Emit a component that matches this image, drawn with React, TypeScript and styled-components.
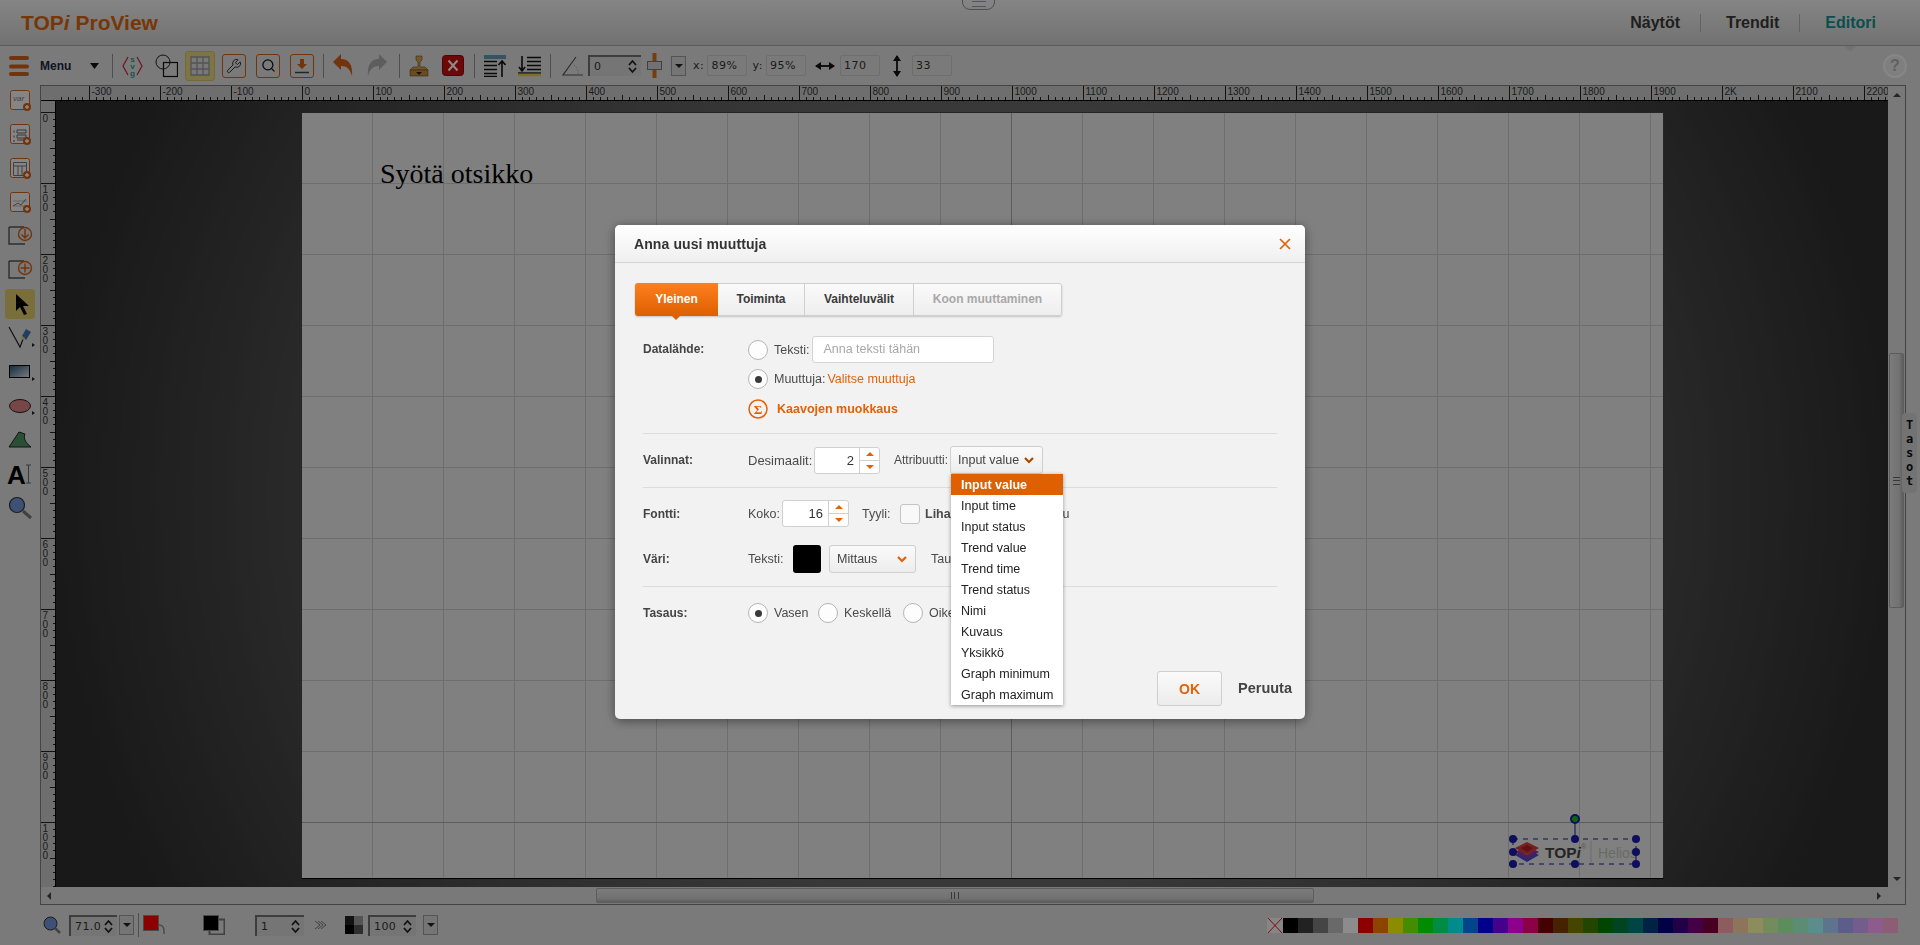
import styled, { createGlobalStyle } from 'styled-components'
import { Search, Wrench } from 'lucide-react'

const GlobalStyle = createGlobalStyle`
  html, body { margin: 0; padding: 0; height: 100%; overflow: hidden; }
  body { font-family: "Liberation Sans", Arial, sans-serif; background: #dedede; }
  #root { height: 100%; }
`

const ORANGE = '#e0620a'
const TOOL_ORANGE = '#cf5f16'

const Shell = styled.div`
  width: 1920px;
  height: 945px;
  display: flex;
  flex-direction: column;
  background: #dedede;
  overflow: hidden;
`

const Header = styled.header`
  position: relative;
  height: 45px;
  flex: none;
  display: flex;
  align-items: center;
  justify-content: space-between;
  padding: 0 44px 0 21px;
  background: linear-gradient(#f2f2f2, #cfcfcf);
  border-bottom: 1px solid #a6a6a6;
`

const Logo = styled.div`
  font-size: 21px;
  font-weight: 700;
  color: #d8650f;
  i { font-style: italic; }
`

const TopTab = styled.div`
  position: absolute;
  left: 962px;
  top: -2px;
  width: 33px;
  height: 12px;
  box-sizing: border-box;
  border: 1px solid #8f9198;
  border-radius: 0 0 8px 8px;
  display: flex;
  align-items: center;
  justify-content: center;
  &::after {
    content: '';
    width: 14px;
    height: 4px;
    border-top: 1px solid #9a9ba0;
    border-bottom: 1px solid #9a9ba0;
  }
`

const Nav = styled.nav`
  display: flex;
  align-items: center;
`

const NavItem = styled.a<{ $active?: boolean }>`
  position: relative;
  height: 18px;
  line-height: 18px;
  padding: 0 ${p => (p.$active ? '0' : '20px')} 0 25px;
  font-size: 16px;
  font-weight: 700;
  color: ${p => (p.$active ? '#12908d' : '#3a3a3a')};
  border-right: ${p => (p.$active ? 'none' : '1px solid #b5b5b5')};
  &::after {
    content: '';
    display: ${p => (p.$active ? 'block' : 'none')};
    position: absolute;
    left: 44px;
    top: 32px;
    border: 6px solid transparent;
    border-top: 6px solid #cfcfcf;
    border-bottom: none;
  }
`

const Toolbar = styled.div`
  height: 39px;
  flex: none;
  display: flex;
  align-items: center;
  color: #222;
`

const Slot = styled.div<{ $ml: number }>`
  margin-left: ${p => p.$ml}px;
  display: flex;
  align-items: center;
  flex: none;
`

const MenuText = styled.span`
  width: 30px;
  font-size: 12px;
  font-weight: 700;
  color: #1c2740;
`

const Sep = styled.div<{ $ml: number }>`
  margin-left: ${p => p.$ml}px;
  width: 1px;
  height: 24px;
  background: #8e8e8e;
  flex: none;
`

const ToggleTile = styled.div`
  width: 30px;
  height: 30px;
  box-sizing: border-box;
  border-radius: 3px;
  background: #e6d67c;
  border: 1px solid #d4c264;
  display: flex;
  align-items: center;
  justify-content: center;
`

const OutlineTile = styled.div`
  width: 24px;
  height: 24px;
  box-sizing: border-box;
  border: 1px solid ${TOOL_ORANGE};
  border-radius: 3px;
  display: flex;
  align-items: center;
  justify-content: center;
  color: #333;
`

const SpinField = styled.div<{ $w: number }>`
  width: ${p => p.$w}px;
  height: 21px;
  box-sizing: border-box;
  border-top: 2px solid #6f6f6f;
  border-left: 2px solid #6f6f6f;
  background: #d6d6d6;
  display: flex;
  align-items: center;
  justify-content: space-between;
  padding: 0 4px;
  font-family: "DejaVu Sans", sans-serif;
  font-size: 11px;
  letter-spacing: 0.4px;
  color: #333;
  overflow: hidden;
`

const SmallDrop = styled.div`
  width: 15px;
  height: 20px;
  box-sizing: border-box;
  border: 1px solid #999;
  background: #d6d6d6;
  display: flex;
  align-items: center;
  justify-content: center;
  &::after {
    content: '';
    border: 4px solid transparent;
    border-top: 4px solid #222;
    border-bottom: none;
  }
`

const CoordLabel = styled.span`
  font-family: "DejaVu Sans", sans-serif;
  font-size: 11px;
  letter-spacing: 0.6px;
  color: #333;
`

const CoordInput = styled.div`
  width: 40px;
  height: 21px;
  box-sizing: border-box;
  border: 1px solid #c8c8c8;
  border-radius: 2px;
  padding-left: 3px;
  line-height: 19px;
  font-family: "DejaVu Sans", sans-serif;
  font-size: 11px;
  letter-spacing: 0.5px;
  color: #333;
`

const HelpButton = styled.div`
  margin-left: auto;
  margin-right: 13px;
  width: 24px;
  height: 24px;
  box-sizing: border-box;
  border: 2px solid #f5f5f5;
  border-radius: 50%;
  background: #e8e8e8;
  text-align: center;
  line-height: 20px;
  font-size: 16px;
  font-weight: 700;
  color: #b0b0b0;
`

const Workspace = styled.div`
  height: 820px;
  flex: none;
  display: flex;
`

const SideTools = styled.aside`
  width: 40px;
  flex: none;
  margin-top: -2px;
  display: flex;
  flex-direction: column;
`

const SideCell = styled.div`
  height: 34px;
  flex: none;
  position: relative;
`

const SelectedTile = styled.div`
  position: absolute;
  left: 5px;
  top: 2px;
  width: 30px;
  height: 30px;
  border-radius: 3px;
  background: #dfc96a;
`

const EditorFrame = styled.div`
  width: 1866px;
  flex: none;
  box-sizing: border-box;
  border: 1px solid #7c7c7c;
  display: grid;
  grid-template-columns: 15px 1832px 17px;
  grid-template-rows: 15px 786px 17px;
  position: relative;
`

const RulerCorner = styled.div`
  background: #c8c8c8;
  border-bottom: 1px solid #000;
  box-sizing: border-box;
`

const RulerBox = styled.svg`
  display: block;
  background: #c8c8c8;
`

const Canvas = styled.div`
  position: relative;
  overflow: hidden;
  background: radial-gradient(ellipse 50% 110% at 50% 50%, #777 0%, #696969 45%, #4e4e4e 72%, #2f2f2f 100%);
`

const SheetPage = styled.div`
  position: absolute;
  left: 245px;
  top: 11px;
  width: 1363px;
  height: 767px;
  box-sizing: border-box;
  border: 1px solid #444;
  border-bottom-color: #000;
  background-color: #eaeaea;
  background-image:
    linear-gradient(to right, #a9a9a9 1px, transparent 1px),
    linear-gradient(to bottom, #a9a9a9 1px, transparent 1px),
    linear-gradient(to right, #c9c9c9 1px, transparent 1px),
    linear-gradient(to bottom, #c9c9c9 1px, transparent 1px);
  background-size: 710px 710px, 710px 710px, 71px 71px, 71px 71px;
  background-position: -1px -1px;
`

const SheetTitle = styled.div`
  position: absolute;
  left: 78px;
  top: 45px;
  font-family: "Liberation Serif", "Times New Roman", serif;
  font-size: 28px;
  color: #000;
`

const SelectionArt = styled.svg`
  position: absolute;
  left: 1449px;
  top: 711px;
`

const VTrack = styled.div`
  grid-column: 3;
  grid-row: 1 / 3;
  background: #dcdcdc;
  display: flex;
  flex-direction: column;
  align-items: center;
  padding: 7px 0 6px;
  box-sizing: border-box;
`

const VThumb = styled.div`
  width: 15px;
  height: 255px;
  margin-top: 256px;
  box-sizing: border-box;
  border: 1px solid #a9a9a9;
  border-radius: 2px;
  background: linear-gradient(to right, #e0e0e0, #d0d0d0 70%, #ababab);
  display: flex;
  align-items: center;
  justify-content: center;
  &::after {
    content: '';
    width: 7px;
    height: 6px;
    border-top: 1px solid #666;
    border-bottom: 1px solid #666;
    background: linear-gradient(transparent 2px, #666 2px, #666 3px, transparent 3px);
  }
`

const ArrowUp = styled.div`
  border: 4px solid transparent;
  border-bottom: 4px solid #444;
  border-top: none;
`

const ArrowDown = styled.div`
  margin-top: auto;
  border: 4px solid transparent;
  border-top: 4px solid #444;
  border-bottom: none;
`

const ArrowCell = styled.div`
  display: flex;
  align-items: center;
  justify-content: center;
  background: #dcdcdc;
  &::after {
    content: '';
    border: 4px solid transparent;
    border-right: 4px solid #444;
    border-left: none;
  }
`

const HTrack = styled.div`
  background: #dcdcdc;
  display: flex;
  align-items: center;
`

const HThumb = styled.div`
  margin-left: 540px;
  width: 718px;
  height: 15px;
  box-sizing: border-box;
  border: 1px solid #a9a9a9;
  border-radius: 2px;
  background: linear-gradient(#e0e0e0, #d0d0d0 70%, #ababab);
  display: flex;
  align-items: center;
  justify-content: center;
  &::after {
    content: '';
    width: 6px;
    height: 7px;
    border-left: 1px solid #666;
    border-right: 1px solid #666;
    background: linear-gradient(to right, transparent 2px, #666 2px, #666 3px, transparent 3px);
  }
`

const ArrowRight = styled.div`
  margin-left: auto;
  margin-right: 7px;
  border: 4px solid transparent;
  border-left: 4px solid #444;
  border-right: none;
`

const TrackEnd = styled.div`
  background: #dedede;
`

const LayersTab = styled.div`
  position: absolute;
  right: -12px;
  top: 327px;
  width: 15px;
  height: 80px;
  border-radius: 4px;
  background: #d2d2d2;
  display: flex;
  flex-direction: column;
  align-items: center;
  justify-content: center;
  font-family: "DejaVu Sans Mono", monospace;
  font-size: 12px;
  font-weight: 700;
  line-height: 14px;
  color: #111;
  z-index: 1;
`

const BottomBar = styled.div`
  flex: 1;
  display: flex;
  align-items: center;
`

const Palette = styled.div`
  margin-left: auto;
  margin-right: 22px;
  display: flex;
  align-items: stretch;
  height: 15px;
`

const Swatch = styled.div<{ $c: string }>`
  width: 15px;
  background: ${p => p.$c};
`

const Overlay = styled.div`
  position: fixed;
  inset: 0;
  padding-bottom: 1px;
  background: rgba(0, 0, 0, 0.45);
  display: flex;
  align-items: center;
  justify-content: center;
  z-index: 10;
`

const Modal = styled.div`
  width: 690px;
  height: 494px;
  border-radius: 5px;
  background: #f2f2f2;
  box-shadow: 0 2px 12px rgba(0, 0, 0, 0.45);
  display: flex;
  flex-direction: column;
  color: #4a4a4a;
  font-size: 12.5px;
`

const ModalHead = styled.div`
  height: 37px;
  flex: none;
  display: flex;
  align-items: center;
  justify-content: space-between;
  padding: 0 14px 0 19px;
  border-radius: 5px 5px 0 0;
  border-bottom: 1px solid #d4d4d4;
  background: linear-gradient(#fff, #efefef);
`

const ModalTitle = styled.h2`
  margin: 0;
  font-size: 14px;
  letter-spacing: 0.1px;
  font-weight: 700;
  color: #333;
`

const TabBar = styled.div`
  margin: 20px 0 0 20px;
  align-self: flex-start;
  display: flex;
  height: 33px;
  box-sizing: border-box;
  border: 1px solid #cfcfcf;
  border-radius: 3px;
  box-shadow: 0 1px 2px rgba(0, 0, 0, 0.2);
`

const Tab = styled.div<{ $w: number; $active?: boolean; $off?: boolean }>`
  position: relative;
  width: ${p => p.$w}px;
  box-sizing: border-box;
  text-align: center;
  line-height: 31px;
  font-size: 12px;
  font-weight: 700;
  color: ${p => (p.$active ? '#fff' : p.$off ? '#a8a8a8' : '#3a3a3a')};
  background: ${p => (p.$active ? 'linear-gradient(#ff7f1e, #dc5f00)' : 'linear-gradient(#fafafa, #eeeeee)')};
  border-right: ${p => (p.$active ? 'none' : '1px solid #cfcfcf')};
  &:first-child { margin: -1px 0 -1px -1px; line-height: 33px; border-radius: 3px 0 0 3px; }
  &:last-child { border-right: none; border-radius: 0 3px 3px 0; }
  &::after {
    content: '';
    display: ${p => (p.$active ? 'block' : 'none')};
    position: absolute;
    left: 37px;
    bottom: -4px;
    border: 4px solid transparent;
    border-top: 4px solid #dc5f00;
    border-bottom: none;
  }
`

const Form = styled.div`
  margin-left: 28px;
  width: 634px;
  display: flex;
  flex-direction: column;
`

const Row = styled.div<{ $mt: number }>`
  margin-top: ${p => p.$mt}px;
  display: flex;
  align-items: center;
`

const RowLabel = styled.div<{ $top?: boolean }>`
  width: 105px;
  flex: none;
  font-size: 12px;
  font-weight: 700;
  color: #444;
  ${p => (p.$top ? 'align-self: flex-start; line-height: 27px;' : '')}
`

const Stack = styled.div`
  display: flex;
  flex-direction: column;
`

const Line = styled.div<{ $mt?: number }>`
  margin-top: ${p => p.$mt ?? 0}px;
  display: flex;
  align-items: center;
`

const Radio = styled.div<{ $on?: boolean }>`
  width: 20px;
  height: 20px;
  margin-right: 6px;
  flex: none;
  box-sizing: border-box;
  border: 1px solid #b5b5b5;
  border-radius: 50%;
  background: #fdfdfd;
  display: flex;
  align-items: center;
  justify-content: center;
  &::after {
    content: '';
    display: ${p => (p.$on ? 'block' : 'none')};
    width: 7px;
    height: 7px;
    border-radius: 50%;
    background: #3a3a3a;
  }
`

const TextInput = styled.div`
  margin-left: 3px;
  width: 182px;
  height: 27px;
  box-sizing: border-box;
  border: 1px solid #d4d4d4;
  border-radius: 3px;
  background: #fff;
  padding-left: 10px;
  line-height: 25px;
  color: #a8a8a8;
`

const LinkText = styled.span<{ $bold?: boolean }>`
  color: ${ORANGE};
  font-weight: ${p => (p.$bold ? 700 : 400)};
  margin-left: ${p => (p.$bold ? '9px' : '2px')};
`

const Divider = styled.div<{ $mt: number }>`
  margin-top: ${p => p.$mt}px;
  height: 1px;
  background: #dcdcdc;
`

const Field = styled.span<{ $w?: number; $ml?: number; $fs?: number }>`
  flex: none;
  width: ${p => (p.$w ? `${p.$w}px` : 'auto')};
  margin-left: ${p => p.$ml ?? 0}px;
  font-size: ${p => p.$fs ?? 12.5}px;
  white-space: nowrap;
`

const Spinner = styled.div<{ $w: number }>`
  width: ${p => p.$w}px;
  height: 27px;
  flex: none;
  box-sizing: border-box;
  border: 1px solid #d0d0d0;
  border-radius: 3px;
  background: #fff;
  display: flex;
  font-size: 13px;
  color: #333;
`

const SpinValue = styled.div`
  flex: 1;
  text-align: right;
  padding-right: 5px;
  line-height: 25px;
`

const SpinButtons = styled.div`
  width: 19px;
  border-left: 1px solid #d0d0d0;
  display: flex;
  flex-direction: column;
`

const SpinArrow = styled.div<{ $down?: boolean }>`
  flex: 1;
  display: flex;
  align-items: center;
  justify-content: center;
  border-top: ${p => (p.$down ? '1px solid #d0d0d0' : 'none')};
  &::after {
    content: '';
    border: 4px solid transparent;
    ${p => (p.$down ? `border-top: 4px solid ${ORANGE}; border-bottom: none;` : `border-bottom: 4px solid ${ORANGE}; border-top: none;`)}
  }
`

const SelectBox = styled.div<{ $w: number; $ml?: number }>`
  position: relative;
  width: ${p => p.$w}px;
  margin-left: ${p => p.$ml ?? 0}px;
  height: 28px;
  flex: none;
  box-sizing: border-box;
  border: 1px solid #cfcfcf;
  border-radius: 3px;
  background: linear-gradient(#fafafa, #ededed);
  display: flex;
  align-items: center;
  justify-content: space-between;
  padding: 0 8px 0 7px;
  color: #444;
`

const Menu = styled.ul`
  position: absolute;
  left: 0;
  top: 27px;
  width: 112px;
  margin: 0;
  padding: 0;
  list-style: none;
  background: #fff;
  box-shadow: 0 1px 4px rgba(0, 0, 0, 0.4);
  z-index: 2;
`

const MenuItem = styled.li<{ $active?: boolean }>`
  height: 20px;
  padding-top: 1px;
  line-height: 21px;
  padding-left: 10px;
  white-space: nowrap;
  color: ${p => (p.$active ? '#fff' : '#222')};
  font-weight: ${p => (p.$active ? 700 : 400)};
  background: ${p => (p.$active ? '#de6000' : 'transparent')};
`

const CheckBox = styled.div`
  width: 20px;
  height: 20px;
  flex: none;
  box-sizing: border-box;
  border: 1px solid #c4c4c4;
  border-radius: 3px;
  background: #f8f8f8;
`

const ColorChip = styled.div<{ $c: string }>`
  width: 28px;
  height: 28px;
  flex: none;
  border-radius: 3px;
  background: ${p => p.$c};
`

const Footer = styled.div`
  margin-top: 48px;
  padding-right: 13px;
  display: flex;
  align-items: center;
  justify-content: flex-end;
`

const OkButton = styled.button`
  width: 65px;
  height: 35px;
  padding: 0;
  border: 1px solid #cfcfcf;
  border-radius: 3px;
  background: linear-gradient(#fafafa, #ececec);
  font-family: inherit;
  font-size: 14px;
  font-weight: 700;
  color: ${ORANGE};
`

const CancelLink = styled.span`
  width: 54px;
  white-space: nowrap;
  margin: -2px 0 0 16px;
  font-size: 14.5px;
  font-weight: 700;
  color: #444;
`

const Chevron = ({ color = ORANGE }: { color?: string }) => (
  <svg width="10" height="8" viewBox="0 0 10 8">
    <path d="M1 2l4 4 4-4" fill="none" stroke={color} strokeWidth="2.2" />
  </svg>
)

const UpDown = () => (
  <svg width="9" height="15" viewBox="0 0 9 15">
    <path d="M1 6l3.5-4L8 6M1 9l3.5 4L8 9" fill="none" stroke="#222" strokeWidth="1.8" />
  </svg>
)

const TopRuler = () => {
  const marks = []
  for (let v = -340; v <= 2240; v += 10) {
    const x = Math.round(246 + v * 0.71) + 0.5
    const len = v % 100 === 0 ? 15 : v % 50 === 0 ? 5 : 3
    marks.push(<line key={v} x1={x} x2={x} y1={14} y2={14 - len} stroke="#222" />)
    if (v % 100 === 0) {
      marks.push(
        <text key={`t${v}`} x={x + 2} y={9} fontSize="10" fill="#333" fontFamily="Liberation Sans">
          {v === 2000 ? '2K' : v}
        </text>,
      )
    }
  }
  return (
    <RulerBox width={1832} height={15} shapeRendering="crispEdges">
      {marks}
      <line x1={0} x2={1832} y1={14.5} y2={14.5} stroke="#000" />
    </RulerBox>
  )
}

const LeftRuler = () => {
  const marks = []
  for (let v = 0; v <= 1090; v += 10) {
    const y = Math.round(11 + v * 0.71) + 0.5
    const len = v % 100 === 0 ? 15 : v % 50 === 0 ? 6 : 3
    marks.push(<line key={v} x1={15} x2={15 - len} y1={y} y2={y} stroke="#222" />)
    if (v % 100 === 0) {
      String(v).split('').forEach((d, i) => {
        marks.push(
          <text key={`t${v}-${i}`} x={1.5} y={y + 9 + i * 9.3} fontSize="10" fill="#333" fontFamily="Liberation Sans">
            {d}
          </text>,
        )
      })
    }
  }
  return (
    <RulerBox width={15} height={786} shapeRendering="crispEdges">
      {marks}
      <line x1={14.5} x2={14.5} y1={0} y2={786} stroke="#000" />
    </RulerBox>
  )
}

const Handle = ({ x, y }: { x: number; y: number }) => <circle cx={x} cy={y} r="4" fill="#1a1aa8" />

const Selection = () => (
  <SelectionArt width={140} height={60} viewBox="1505 812 140 60">
    <path d="M1515 855l12 7 12-7-4-2-8 5-8-5z" fill="#4a4ad0" />
    <path d="M1515 852l12 7 12-7-4-2-8 5-8-5z" fill="#8a3aa8" />
    <path d="M1515 848l12-6 12 6-12 7z" fill="#d83a3a" />
    <path d="M1521 848l6-3 6 3-6 4z" fill="#b0202a" />
    <text x="1545" y="858" fontSize="15.500" fontWeight="700" fontFamily="Liberation Sans" fill="#444">
      TOP<tspan fontStyle="italic">i</tspan>
    </text>
    <text x="1581" y="849" fontSize="7" fontFamily="Liberation Sans" fill="#999">®</text>
    <line x1="1591" x2="1591" y1="841" y2="862" stroke="#c4c4c4" />
    <text x="1598" y="858" fontSize="14" fontFamily="Liberation Sans" fill="#c0c0c0">Helios</text>
    <rect x="1513" y="839" width="123" height="25" fill="none" stroke="#1a1aa8" strokeDasharray="5 5" />
    <line x1="1575" x2="1575" y1="819" y2="839" stroke="#1a1aa8" />
    <circle cx="1575" cy="819" r="4" fill="#12c012" stroke="#1a1aa8" strokeWidth="2" />
    {[
      [1513, 839], [1575, 839], [1636, 839], [1513, 852],
      [1636, 852], [1513, 864], [1575, 864], [1636, 864],
    ].map(([x, y]) => (
      <Handle key={`${x}-${y}`} x={x} y={y} />
    ))}
  </SelectionArt>
)

// small tiles at the top of the left column, all share the orange frame and plus badge
const AddTile = ({ children }: { children: React.ReactNode }) => (
  <svg width="40" height="34" viewBox="0 0 40 34">
    <rect x="10.5" y="7.5" width="19" height="19" rx="2" fill="#f2f2f2" stroke={TOOL_ORANGE} />
    {children}
    <circle cx="27" cy="24" r="4" fill={TOOL_ORANGE} />
    <path d="M25 24h4M27 22v4" stroke="#fff" strokeWidth="1.3" />
  </svg>
)

const FolderIcon = ({ plus }: { plus?: boolean }) => (
  <svg width="40" height="34" viewBox="0 0 40 34">
    <path d="M9 8h15M9 8v17h16" fill="none" stroke="#555" strokeWidth="1.4" />
    <circle cx="25" cy="15" r="6.5" fill="none" stroke={TOOL_ORANGE} strokeWidth="1.4" />
    {plus ? (
      <path d="M25 10.5v9M20.5 15h9" stroke={TOOL_ORANGE} strokeWidth="1.4" />
    ) : (
      <path d="M25 10v9M21.5 15.5l3.5 3.5 3.5-3.5" fill="none" stroke={TOOL_ORANGE} strokeWidth="1.4" />
    )}
  </svg>
)

const SideFlyout = () => <path d="M32 22l3 2-3 2z" fill="#222" />

const sideTools = [
  <AddTile key="var">
    <text x="13" y="18" fontSize="8" fontStyle="italic" fontFamily="Liberation Sans" fill="#777">var</text>
  </AddTile>,
  <AddTile key="list">
    <path d="M17 13h9v3h-9zM17 18h9v3h-9zM17 23h7" fill="none" stroke="#666" />
    <path d="M13 14.5h2M13 19.5h2M13 24h2" stroke="#aaa" strokeWidth="2" />
  </AddTile>,
  <AddTile key="table">
    <path d="M13.5 11.5h13v13h-13zM13.5 15h13M18 15v9M22 15v9" fill="none" stroke="#777" />
  </AddTile>,
  <AddTile key="chart">
    <path d="M13 21h14M13 16h14" stroke="#bbb" />
    <path d="M13 21l5-3 3 2 5-6" fill="none" stroke="#777" />
  </AddTile>,
  <FolderIcon key="open" />,
  <FolderIcon key="new" plus />,
  <svg key="arrow" width="40" height="34" viewBox="0 0 40 34" style={{ position: 'relative' }}>
    <path d="M16 7v17l4-4 4 8 3-1-4-8h6z" fill="#000" />
  </svg>,
  <svg key="pen" width="40" height="34" viewBox="0 0 40 34">
    <path d="M9 6l11 20 5-13" fill="none" stroke="#222" strokeWidth="1.2" />
    <path d="M22 15l4-7 5 3-5 8z" fill="#3d6fb0" />
    <path d="M22 15l3 2-1 2-3-1z" fill="#eccc4a" />
    <SideFlyout />
  </svg>,
  <svg key="rect" width="40" height="34" viewBox="0 0 40 34">
    <defs>
      <linearGradient id="rectFill" x1="0" x2="1" y1="0" y2="1">
        <stop offset="0" stopColor="#27506e" />
        <stop offset="1" stopColor="#d8e4ea" />
      </linearGradient>
    </defs>
    <rect x="9.5" y="10.5" width="20" height="12" fill="url(#rectFill)" stroke="#000" />
    <SideFlyout />
  </svg>,
  <svg key="ellipse" width="40" height="34" viewBox="0 0 40 34">
    <ellipse cx="20" cy="17" rx="10.5" ry="6.5" fill="#d98080" stroke="#222" />
    <SideFlyout />
  </svg>,
  <svg key="path" width="40" height="34" viewBox="0 0 40 34">
    <path d="M9 24L19 9l6 2c-2 5 1 9 6 13z" fill="#4c9060" stroke="#222" />
  </svg>,
  <svg key="text" width="40" height="34" viewBox="0 0 40 34">
    <text x="7" y="27" fontSize="26" fontWeight="700" fontFamily="Liberation Sans" fill="#000">A</text>
    <path d="M26 8h5M28.500 8v18M26 26h5" stroke="#666" fill="none" />
  </svg>,
  <svg key="zoom" width="40" height="34" viewBox="0 0 40 34">
    <circle cx="17" cy="14" r="7.5" fill="#6f94d8" stroke="#333" strokeWidth="1.2" />
    <path d="M23 20l8 7" stroke="#777" strokeWidth="3" />
  </svg>,
]

const palette = [
  '#000000', '#3f3f3f', '#7f7f7f', '#bfbfbf', '#ffffff', '#ff0000', '#ff7f00', '#ffff00', '#7fff00', '#00ff00',
  '#00ff7f', '#00ffff', '#007fff', '#0000ff', '#7f00ff', '#ff00ff', '#ff007f', '#7f0000', '#7f3f00', '#7f7f00',
  '#3f7f00', '#007f00', '#007f3f', '#007f7f', '#003f7f', '#00007f', '#3f007f', '#7f007f', '#7f003f', '#ffaaaa',
  '#ffd4aa', '#ffffaa', '#d4ffaa', '#aaffaa', '#aaffd4', '#aaffff', '#aad4ff', '#aaaaff', '#d4aaff', '#ffaaff',
  '#ffaad4',
]

const attributes = [
  'Input value', 'Input time', 'Input status', 'Trend value', 'Trend time', 'Trend status',
  'Nimi', 'Kuvaus', 'Yksikkö', 'Graph minimum', 'Graph maximum',
]

const App = () => {
  return (
    <Shell>
      <GlobalStyle />
      <Header>
        <Logo>TOP<i>i</i> ProView</Logo>
        <TopTab />
        <Nav>
          <NavItem>Näytöt</NavItem>
          <NavItem>Trendit</NavItem>
          <NavItem $active>Editori</NavItem>
        </Nav>
      </Header>

      <Toolbar>
        <Slot $ml={9}>
          <svg width="20" height="20" viewBox="0 0 20 20">
            <path d="M2 2h16M2 10.500h16M2 18h16" stroke={TOOL_ORANGE} strokeWidth="4" strokeLinecap="round" />
          </svg>
        </Slot>
        <Slot $ml={11}><MenuText>Menu</MenuText></Slot>
        <Slot $ml={20}>
          <svg width="9" height="6" viewBox="0 0 9 6"><path d="M0 0h9L4.500 6z" fill="#111" /></svg>
        </Slot>
        <Sep $ml={13} />
        <Slot $ml={9}>
          <svg width="21" height="24" viewBox="0 0 21 24">
            <path d="M6 3L1 12l5 9M15 3l5 9-5 9" fill="none" stroke="#c4263a" strokeWidth="1.2" />
            <text x="10.500" y="8" textAnchor="middle" fontSize="8" fontWeight="700" fill="#1f9c8c" fontFamily="Liberation Sans">s</text>
            <text x="10.500" y="15" textAnchor="middle" fontSize="8" fontWeight="700" fill="#1f9c8c" fontFamily="Liberation Sans">v</text>
            <text x="10.500" y="22" textAnchor="middle" fontSize="8" fontWeight="700" fill="#1f9c8c" fontFamily="Liberation Sans">g</text>
          </svg>
        </Slot>
        <Slot $ml={12}>
          <svg width="23" height="24" viewBox="0 0 23 24">
            <circle cx="8" cy="8" r="7" fill="none" stroke="#222" />
            <rect x="8.500" y="8.500" width="14" height="14" fill="none" stroke="#111" strokeWidth="1.200" />
          </svg>
        </Slot>
        <Slot $ml={7}>
          <ToggleTile>
            <svg width="20" height="20" viewBox="0 0 20 20">
              <path d="M1 1h18v18H1zM7 1v18M13 1v18M1 7h18M1 13h18" fill="#ddd" stroke="#999" strokeWidth="1.300" />
            </svg>
          </ToggleTile>
        </Slot>
        <Slot $ml={7}><OutlineTile><Wrench size={16} strokeWidth={1.5} /></OutlineTile></Slot>
        <Slot $ml={10}><OutlineTile><Search size={15} strokeWidth={2} color="#111" /></OutlineTile></Slot>
        <Slot $ml={10}>
          <OutlineTile>
            <svg width="16" height="16" viewBox="0 0 16 16">
              <path d="M6 1h4v5h3l-5 5-5-5h3z" fill={TOOL_ORANGE} />
              <path d="M1 14.500h14" stroke="#444" strokeWidth="1.500" />
            </svg>
          </OutlineTile>
        </Slot>
        <Sep $ml={9} />
        <Slot $ml={9}>
          <svg width="20" height="24" viewBox="0 0 20 24">
            <path d="M0 8l8-8v5c8 0 12 6 11 17-2-7-5-10-11-10v4z" fill={TOOL_ORANGE} />
          </svg>
        </Slot>
        <Slot $ml={14}>
          <svg width="20" height="24" viewBox="0 0 20 24">
            <path d="M20 8l-8-8v5C4 5 0 11 1 22c2-7 5-10 11-10v4z" fill="#aaa" />
          </svg>
        </Slot>
        <Sep $ml={12} />
        <Slot $ml={9}>
          <svg width="20" height="22" viewBox="0 0 20 22">
            <path d="M7 1h6v4l-2 2v5h5l3 3H1l3-3h5V7L7 5z" fill="#d4a050" stroke="#6b4a1e" strokeWidth="0.600" />
            <path d="M1 15h18v6H1z" fill="#c08a3a" stroke="#6b4a1e" strokeWidth="0.600" />
            <path d="M7 17h6l-3 3z" fill="#222" />
          </svg>
        </Slot>
        <Slot $ml={13}>
          <svg width="22" height="21" viewBox="0 0 22 21">
            <rect x="0.500" y="0.500" width="21" height="20" rx="3" fill="#c80d0d" stroke="#7a1010" />
            <path d="M6.500 5.500l9 10M15.500 5.500l-9 10" stroke="#fff" strokeWidth="2" />
          </svg>
        </Slot>
        <Sep $ml={10} />
        <Slot $ml={9}>
          <svg width="22" height="22" viewBox="0 0 22 22">
            <path d="M0 0h22v4H0z" fill="#5f9ab8" />
            <path d="M0 6.500h13M0 10.500h13M0 14.500h13M0 18.500h13M0 21.500h13" stroke="#111" strokeWidth="1.600" />
            <path d="M18 22V6M14.500 10L18 6l3.500 4" fill="none" stroke="#111" strokeWidth="1.600" />
          </svg>
        </Slot>
        <Slot $ml={12}>
          <svg width="23" height="22" viewBox="0 0 23 22">
            <path d="M9 2.500h14M9 6.500h14M9 10.500h14M9 14.500h14" stroke="#111" strokeWidth="1.600" />
            <path d="M4 1v14M1 12l3 4 3-4" fill="none" stroke="#111" strokeWidth="1.600" />
            <path d="M0 18h23" stroke="#111" strokeWidth="1.300" />
            <path d="M0 20h23" stroke="#e8c84c" strokeWidth="2.500" />
          </svg>
        </Slot>
        <Sep $ml={9} />
        <Slot $ml={11}>
          <svg width="22" height="22" viewBox="0 0 22 22">
            <path d="M21 20H1L14 2" fill="none" stroke="#555" strokeWidth="1.200" />
            <path d="M12 10c3 2 4 5 4 9" fill="none" stroke="#aaa" strokeDasharray="1.500 1.500" />
          </svg>
        </Slot>
        <Slot $ml={4}><SpinField $w={53}>0<UpDown /></SpinField></Slot>
        <Slot $ml={6}>
          <svg width="15" height="25" viewBox="0 0 15 25">
            <rect x="5.500" y="0" width="4" height="25" fill="#d4731c" />
            <rect x="0.500" y="8.500" width="14" height="8" fill="#cfcfcf" stroke="#777" />
          </svg>
        </Slot>
        <Slot $ml={9}><SmallDrop /></Slot>
        <Slot $ml={7}><CoordLabel>x:</CoordLabel></Slot>
        <Slot $ml={3}><CoordInput>89%</CoordInput></Slot>
        <Slot $ml={5}><CoordLabel>y:</CoordLabel></Slot>
        <Slot $ml={3}><CoordInput>95%</CoordInput></Slot>
        <Slot $ml={9}>
          <svg width="20" height="12" viewBox="0 0 20 12">
            <path d="M1 6h18" stroke="#111" strokeWidth="1.800" />
            <path d="M0 6l6-4v8zM20 6l-6-4v8z" fill="#111" />
          </svg>
        </Slot>
        <Slot $ml={5}><CoordInput>170</CoordInput></Slot>
        <Slot $ml={13}>
          <svg width="8" height="22" viewBox="0 0 8 22">
            <path d="M4 1v20" stroke="#111" strokeWidth="1.800" />
            <path d="M4 0l4 6H0zM4 22l4-6H0z" fill="#111" />
          </svg>
        </Slot>
        <Slot $ml={11}><CoordInput>33</CoordInput></Slot>
        <HelpButton>?</HelpButton>
      </Toolbar>

      <Workspace>
        <SideTools>
          {sideTools.map((tool, i) => (
            <SideCell key={i}>
              {i === 6 && <SelectedTile />}
              {tool}
            </SideCell>
          ))}
        </SideTools>
        <EditorFrame>
          <RulerCorner />
          <TopRuler />
          <VTrack>
            <ArrowUp />
            <VThumb />
            <ArrowDown />
          </VTrack>
          <LeftRuler />
          <Canvas>
            <SheetPage>
              <SheetTitle>Syötä otsikko</SheetTitle>
            </SheetPage>
            <Selection />
          </Canvas>
          <ArrowCell />
          <HTrack>
            <HThumb />
            <ArrowRight />
          </HTrack>
          <TrackEnd />
          <LayersTab>
            <span>T</span><span>a</span><span>s</span><span>o</span><span>t</span>
          </LayersTab>
        </EditorFrame>
      </Workspace>

      <BottomBar>
        <Slot $ml={43}>
          <svg width="18" height="18" viewBox="0 0 18 18">
            <circle cx="7.500" cy="7.500" r="6.500" fill="#6f94d8" stroke="#333" />
            <path d="M12 12l5 5" stroke="#777" strokeWidth="2.500" />
          </svg>
        </Slot>
        <Slot $ml={8}><SpinField $w={48}>71.0<UpDown /></SpinField></Slot>
        <Slot $ml={2}><SmallDrop /></Slot>
        <Sep $ml={4} />
        <Slot $ml={4}>
          <svg width="22" height="20" viewBox="0 0 22 20">
            <path d="M16 10c3 0 5 2 5 6v3" fill="none" stroke="#888" strokeWidth="1.500" />
            <rect x="0.500" y="0.500" width="15" height="15" fill="#ff0000" stroke="#888" />
          </svg>
        </Slot>
        <Slot $ml={38}>
          <svg width="22" height="20" viewBox="0 0 22 20">
            <rect x="6.500" y="4.500" width="15" height="15" fill="none" stroke="#777" strokeWidth="2" />
            <rect x="0.500" y="0.500" width="15" height="15" fill="#000" stroke="#888" />
          </svg>
        </Slot>
        <Slot $ml={30}><SpinField $w={49}>1<UpDown /></SpinField></Slot>
        <Slot $ml={11}>
          <svg width="14" height="8" viewBox="0 0 14 8">
            <path d="M0 0l5 4-5 4M6 0l5 4-5 4M3 0l5 4-5 4" fill="none" stroke="#777" />
          </svg>
        </Slot>
        <Slot $ml={16}>
          <svg width="18" height="18" viewBox="0 0 18 18">
            <rect width="18" height="18" fill="#222" />
            <rect x="9" width="9" height="9" fill="#999" />
            <rect y="9" width="9" height="9" fill="#000" />
            <rect x="9" y="9" width="9" height="9" fill="#555" />
          </svg>
        </Slot>
        <Slot $ml={5}><SpinField $w={48}>100<UpDown /></SpinField></Slot>
        <Slot $ml={7}><SmallDrop /></Slot>
        <Palette>
          <svg width="16" height="15" viewBox="0 0 16 15">
            <rect width="16" height="15" fill="#f5f5f5" />
            <path d="M1 0l14 15M15 0L1 15" stroke="#ee1111" />
          </svg>
          {palette.map(c => <Swatch key={c} $c={c} />)}
        </Palette>
      </BottomBar>

      <Overlay>
        <Modal>
          <ModalHead>
            <ModalTitle>Anna uusi muuttuja</ModalTitle>
            <svg width="12" height="12" viewBox="0 0 12 12">
              <path d="M1 1l10 10M11 1L1 11" stroke={ORANGE} strokeWidth="1.700" />
            </svg>
          </ModalHead>
          <TabBar>
            <Tab $w={83} $active>Yleinen</Tab>
            <Tab $w={87}>Toiminta</Tab>
            <Tab $w={109}>Vaihteluvälit</Tab>
            <Tab $w={147} $off>Koon muuttaminen</Tab>
          </TabBar>
          <Form>
            <Row $mt={20}>
              <RowLabel $top>Datalähde:</RowLabel>
              <Stack>
                <Line>
                  <Radio />
                  <span>Teksti:</span>
                  <TextInput>Anna teksti tähän</TextInput>
                </Line>
                <Line $mt={6}>
                  <Radio $on />
                  <span>Muuttuja:</span>
                  <LinkText>Valitse muuttuja</LinkText>
                </Line>
                <Line $mt={10}>
                  <svg width="20" height="20" viewBox="0 0 20 20">
                    <circle cx="10" cy="10" r="9" fill="none" stroke={ORANGE} strokeWidth="1.500" />
                    <text x="10" y="14.500" textAnchor="middle" fontSize="13" fontWeight="700" fontFamily="Liberation Serif" fill={ORANGE}>Σ</text>
                  </svg>
                  <LinkText $bold>Kaavojen muokkaus</LinkText>
                </Line>
              </Stack>
            </Row>
            <Divider $mt={14} />
            <Row $mt={12}>
              <RowLabel>Valinnat:</RowLabel>
              <Field $w={66} $fs={13}>Desimaalit:</Field>
              <Spinner $w={66}>
                <SpinValue>2</SpinValue>
                <SpinButtons><SpinArrow /><SpinArrow $down /></SpinButtons>
              </Spinner>
              <Field $w={56} $ml={14} $fs={12}>Attribuutti:</Field>
              <SelectBox $w={93}>
                Input value
                <Chevron color="#a84a00" />
                <Menu>
                  {attributes.map((a, i) => <MenuItem key={a} $active={i === 0}>{a}</MenuItem>)}
                </Menu>
              </SelectBox>
            </Row>
            <Divider $mt={13} />
            <Row $mt={12}>
              <RowLabel>Fontti:</RowLabel>
              <Field $w={34}>Koko:</Field>
              <Spinner $w={67}>
                <SpinValue>16</SpinValue>
                <SpinButtons><SpinArrow /><SpinArrow $down /></SpinButtons>
              </Spinner>
              <Field $w={38} $ml={13}>Tyyli:</Field>
              <CheckBox />
              <Field $ml={5}><b>Lihavoitu</b></Field>
              <Field $ml={34}>Kursivoitu</Field>
            </Row>
            <Row $mt={18}>
              <RowLabel>Väri:</RowLabel>
              <Field $w={45}>Teksti:</Field>
              <ColorChip $c="#000" />
              <SelectBox $w={87} $ml={8}>
                Mittaus
                <Chevron />
              </SelectBox>
              <Field $ml={15}>Tausta:</Field>
            </Row>
            <Divider $mt={13} />
            <Row $mt={16}>
              <RowLabel>Tasaus:</RowLabel>
              <Radio $on />
              <Field $w={44}>Vasen</Field>
              <Radio />
              <Field $w={59}>Keskellä</Field>
              <Radio />
              <Field>Oikea</Field>
            </Row>
          </Form>
          <Footer>
            <OkButton>OK</OkButton>
            <CancelLink>Peruuta</CancelLink>
          </Footer>
        </Modal>
      </Overlay>
    </Shell>
  )
}

export default App
